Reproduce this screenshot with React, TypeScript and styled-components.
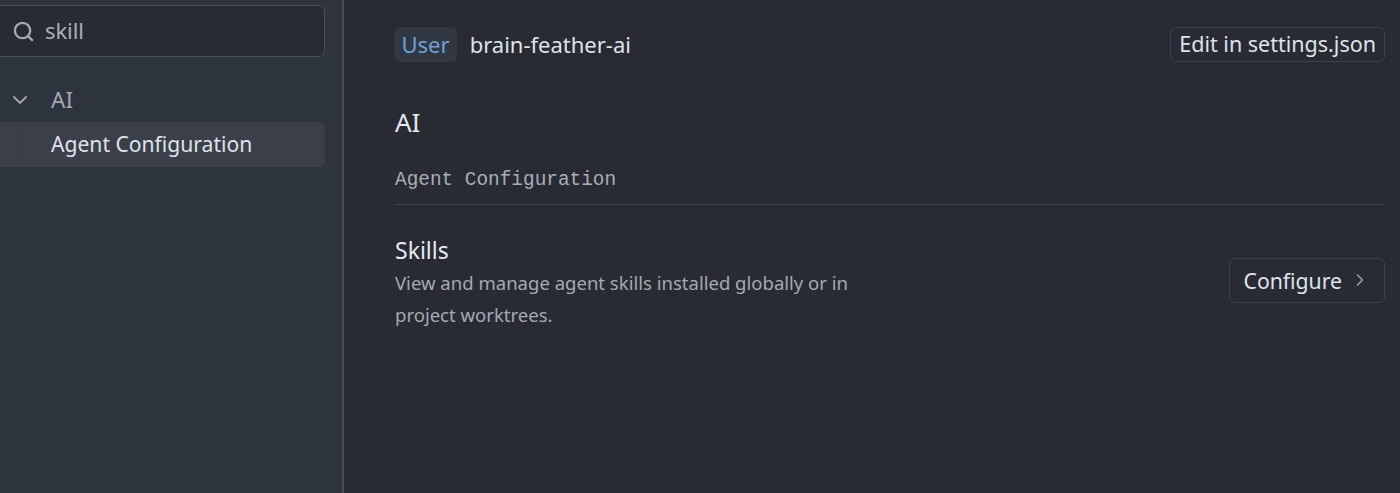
import React from 'react';
import styled, { createGlobalStyle } from 'styled-components';
import { ChevronDown, ChevronRight, Search } from 'lucide-react';

const GlobalStyle = createGlobalStyle`
  html, body {
    margin: 0;
    padding: 0;
    height: 100%;
    overflow: hidden;
    background: #282b33;
  }
  #root {
    height: 100%;
  }
`;

const Shell = styled.div`
  display: flex;
  width: 1400px;
  height: 493px;
  overflow: hidden;
  font-family: 'Noto Sans', sans-serif;
`;

const Sidebar = styled.aside`
  flex: 0 0 344px;
  box-sizing: border-box;
  padding: 5px 17px 0 0;
  background: #2e343e;
  border-right: 2px solid #474d59;
`;

const SearchBox = styled.div`
  display: flex;
  align-items: center;
  gap: 10px;
  box-sizing: border-box;
  height: 52px;
  margin-left: -4px;
  padding: 0 0 3px 15px;
  background: #282b33;
  border: 1.5px solid #4a505c;
  border-radius: 6px;
  color: #a9afba;
  font-size: 22px;
  letter-spacing: -0.1px;
  svg {
    color: #a4a9b3;
    flex: none;
    margin-top: 3px;
  }
`;

const TreeGroup = styled.div`
  display: flex;
  align-items: center;
  height: 44px;
  margin-top: 21px;
  padding: 0 0 2px 8px;
  box-sizing: border-box;
  gap: 19px;
  color: #a4a9b3;
  font-size: 22.5px;
  svg {
    flex: none;
    margin-top: 2px;
  }
`;

const TreeItem = styled.div`
  display: flex;
  align-items: center;
  box-sizing: border-box;
  height: 45px;
  padding-bottom: 2px;
  background: #3a3f4a;
  border-radius: 0 6px 6px 0;
  color: #dfe3e9;
  font-size: 21.1px;
`;

const IndentGuide = styled.span`
  flex: none;
  align-self: stretch;
  width: 22px;
  margin: 0 29px -2px 0;
  box-sizing: border-box;
  border-right: 1px solid #353a45;
`;

const Main = styled.main`
  flex: 1;
  min-width: 0;
  box-sizing: border-box;
  padding: 27px 15px 0 51px;
  background: #282b33;
`;

const HeaderRow = styled.div`
  display: flex;
  align-items: center;
  height: 35px;
`;

const ScopeBadge = styled.span`
  display: inline-flex;
  align-items: center;
  box-sizing: border-box;
  height: 35px;
  padding: 0 7px 2px 6.5px;
  background: #313844;
  border-radius: 6px;
  color: #6ea0d8;
  font-size: 22px;
`;

const ProjectName = styled.span`
  margin: 0 0 2px 13px;
  color: #dfe3e9;
  font-size: 22px;
`;

const OutlineButton = styled.button`
  display: inline-flex;
  align-items: center;
  box-sizing: border-box;
  height: 35px;
  padding: 0 8px 2px;
  margin-left: auto;
  background: transparent;
  border: 1px solid #3d414b;
  border-radius: 6px;
  color: #dfe3e9;
  font-family: inherit;
  font-size: 21.5px;
  white-space: nowrap;
`;

const ConfigureButton = styled(OutlineButton)`
  gap: 8px;
  height: 45px;
  padding: 0 14px;
  margin-top: -4px;
  font-size: 21.2px;
  svg {
    color: #a4a9b3;
  }
`;

const SectionTitle = styled.h2`
  margin: 38px 0 0;
  color: #e6e9ee;
  font-size: 26px;
  font-weight: 400;
  line-height: 44px;
`;

const SubsectionTitle = styled.h3`
  box-sizing: border-box;
  height: 50px;
  margin: 11px 0 0;
  padding-top: 12px;
  border-bottom: 1px solid #41454f;
  color: #a9aeb8;
  font-family: 'Liberation Mono', monospace;
  font-size: 19.4px;
  font-weight: 400;
  line-height: 26px;
`;

const SettingRow = styled.div`
  display: flex;
  align-items: center;
  margin-top: 28px;
`;

const SettingText = styled.div`
  width: 460px;
`;

const SettingName = styled.div`
  color: #e6e9ee;
  font-size: 23px;
  line-height: 34px;
`;

const SettingDescription = styled.div`
  color: #a4a9b3;
  font-size: 18.55px;
  line-height: 32px;
`;

export default function App() {
  return (
    <>
      <GlobalStyle />
      <Shell>
        <Sidebar>
          <SearchBox>
            <Search size={23} strokeWidth={2.4} />
            skill
          </SearchBox>
          <TreeGroup>
            <ChevronDown size={24} strokeWidth={1.8} />
            AI
          </TreeGroup>
          <TreeItem>
            <IndentGuide />
            Agent Configuration
          </TreeItem>
        </Sidebar>
        <Main>
          <HeaderRow>
            <ScopeBadge>User</ScopeBadge>
            <ProjectName>brain-feather-ai</ProjectName>
            <OutlineButton>Edit in settings.json</OutlineButton>
          </HeaderRow>
          <SectionTitle>AI</SectionTitle>
          <SubsectionTitle>Agent Configuration</SubsectionTitle>
          <SettingRow>
            <SettingText>
              <SettingName>Skills</SettingName>
              <SettingDescription>
                View and manage agent skills installed globally or in project worktrees.
              </SettingDescription>
            </SettingText>
            <ConfigureButton>
              Configure
              <ChevronRight size={20} strokeWidth={1.6} />
            </ConfigureButton>
          </SettingRow>
        </Main>
      </Shell>
    </>
  );
}
